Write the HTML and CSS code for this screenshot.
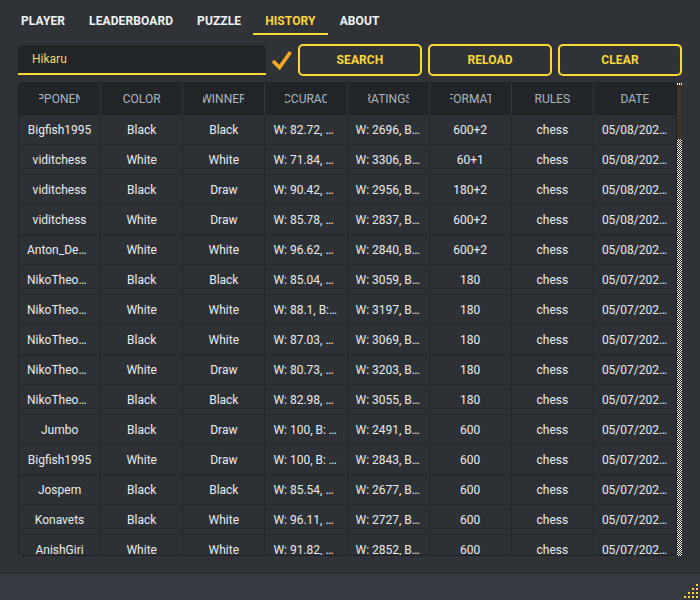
FILE: index.html
```html
<!DOCTYPE html>
<html>
<head>
<meta charset="utf-8">
<link rel="stylesheet" href="styles.css">
</head>
<body>
<div class="app">
  <nav class="tabs">
    <a class="tab">PLAYER</a>
    <a class="tab">LEADERBOARD</a>
    <a class="tab">PUZZLE</a>
    <a class="tab active">HISTORY</a>
    <a class="tab">ABOUT</a>
  </nav>
  <main class="content">
    <div class="toolbar">
      <div class="search-input">Hikaru</div>
      <div class="check">
        <svg width="22" height="20" viewBox="0 0 22 20"><polyline points="2,11 8.5,17.5 19.5,2" fill="none" stroke="#f7a823" stroke-width="3.6"/></svg>
      </div>
      <button class="btn">SEARCH</button>
      <button class="btn">RELOAD</button>
      <button class="btn">CLEAR</button>
    </div>
    <div class="table-wrap">
      <div class="table">
        <div class="row head">
          <div class="hcell"><div class="clip"><span>OPPONENT</span></div></div>
          <div class="hcell"><div class="clip"><span>COLOR</span></div></div>
          <div class="hcell"><div class="clip"><span>WINNER</span></div></div>
          <div class="hcell"><div class="clip"><span>ACCURACY</span></div></div>
          <div class="hcell"><div class="clip"><span>RATINGS</span></div></div>
          <div class="hcell"><div class="clip"><span>FORMAT</span></div></div>
          <div class="hcell"><div class="clip"><span>RULES</span></div></div>
          <div class="hcell"><div class="clip"><span>DATE</span></div></div>
        </div>
        <div class="row"><div class="cell">Bigfish1995</div><div class="cell">Black</div><div class="cell">Black</div><div class="cell">W: 82.72, B: 79.10</div><div class="cell">W: 2696, B: 3206</div><div class="cell">600+2</div><div class="cell">chess</div><div class="cell">05/08/2022, 21:14</div></div>
        <div class="row"><div class="cell">viditchess</div><div class="cell">White</div><div class="cell">White</div><div class="cell">W: 71.84, B: 65.20</div><div class="cell">W: 3306, B: 2710</div><div class="cell">60+1</div><div class="cell">chess</div><div class="cell">05/08/2022, 19:02</div></div>
        <div class="row"><div class="cell">viditchess</div><div class="cell">Black</div><div class="cell">Draw</div><div class="cell">W: 90.42, B: 91.05</div><div class="cell">W: 2956, B: 2960</div><div class="cell">180+2</div><div class="cell">chess</div><div class="cell">05/08/2022, 18:47</div></div>
        <div class="row"><div class="cell">viditchess</div><div class="cell">White</div><div class="cell">Draw</div><div class="cell">W: 85.78, B: 84.30</div><div class="cell">W: 2837, B: 2790</div><div class="cell">600+2</div><div class="cell">chess</div><div class="cell">05/08/2022, 18:20</div></div>
        <div class="row"><div class="cell">Anton_Demchenko</div><div class="cell">White</div><div class="cell">White</div><div class="cell">W: 96.62, B: 80.11</div><div class="cell">W: 2840, B: 2701</div><div class="cell">600+2</div><div class="cell">chess</div><div class="cell">05/08/2022, 17:55</div></div>
        <div class="row"><div class="cell">NikoTheodorou</div><div class="cell">Black</div><div class="cell">Black</div><div class="cell">W: 85.04, B: 92.40</div><div class="cell">W: 3059, B: 3227</div><div class="cell">180</div><div class="cell">chess</div><div class="cell">05/07/2022, 23:41</div></div>
        <div class="row"><div class="cell">NikoTheodorou</div><div class="cell">White</div><div class="cell">White</div><div class="cell">W: 88.1, B: 76.3</div><div class="cell">W: 3197, B: 3052</div><div class="cell">180</div><div class="cell">chess</div><div class="cell">05/07/2022, 23:33</div></div>
        <div class="row"><div class="cell">NikoTheodorou</div><div class="cell">Black</div><div class="cell">White</div><div class="cell">W: 87.03, B: 80.65</div><div class="cell">W: 3069, B: 3190</div><div class="cell">180</div><div class="cell">chess</div><div class="cell">05/07/2022, 23:25</div></div>
        <div class="row"><div class="cell">NikoTheodorou</div><div class="cell">White</div><div class="cell">Draw</div><div class="cell">W: 80.73, B: 82.21</div><div class="cell">W: 3203, B: 3061</div><div class="cell">180</div><div class="cell">chess</div><div class="cell">05/07/2022, 23:17</div></div>
        <div class="row"><div class="cell">NikoTheodorou</div><div class="cell">Black</div><div class="cell">Black</div><div class="cell">W: 82.98, B: 90.14</div><div class="cell">W: 3055, B: 3210</div><div class="cell">180</div><div class="cell">chess</div><div class="cell">05/07/2022, 23:09</div></div>
        <div class="row"><div class="cell">Jumbo</div><div class="cell">Black</div><div class="cell">Draw</div><div class="cell">W: 100, B: 100</div><div class="cell">W: 2491, B: 2843</div><div class="cell">600</div><div class="cell">chess</div><div class="cell">05/07/2022, 20:30</div></div>
        <div class="row"><div class="cell">Bigfish1995</div><div class="cell">White</div><div class="cell">Draw</div><div class="cell">W: 100, B: 100</div><div class="cell">W: 2843, B: 2696</div><div class="cell">600</div><div class="cell">chess</div><div class="cell">05/07/2022, 20:05</div></div>
        <div class="row"><div class="cell">Jospem</div><div class="cell">Black</div><div class="cell">Black</div><div class="cell">W: 85.54, B: 89.02</div><div class="cell">W: 2677, B: 2843</div><div class="cell">600</div><div class="cell">chess</div><div class="cell">05/07/2022, 19:40</div></div>
        <div class="row"><div class="cell">Konavets</div><div class="cell">Black</div><div class="cell">White</div><div class="cell">W: 96.11, B: 78.40</div><div class="cell">W: 2727, B: 2843</div><div class="cell">600</div><div class="cell">chess</div><div class="cell">05/07/2022, 19:12</div></div>
        <div class="row"><div class="cell">AnishGiri</div><div class="cell">White</div><div class="cell">White</div><div class="cell">W: 91.82, B: 80.77</div><div class="cell">W: 2852, B: 2843</div><div class="cell">600</div><div class="cell">chess</div><div class="cell">05/07/2022, 18:50</div></div>
      </div>
      <div class="scrollbar"><div class="dots"></div><div class="thumb"></div></div>
    </div>
  </main>
  <footer class="status">
    <svg class="grip" width="14" height="14" viewBox="0 0 14 14" fill="#fdd835">
      <rect x="12" y="0" width="2" height="2"/>
      <rect x="8" y="4" width="2" height="2"/><rect x="12" y="4" width="2" height="2"/>
      <rect x="4" y="8" width="2" height="2"/><rect x="8" y="8" width="2" height="2"/><rect x="12" y="8" width="2" height="2"/>
      <rect x="0" y="12" width="2" height="2"/><rect x="4" y="12" width="2" height="2"/><rect x="8" y="12" width="2" height="2"/><rect x="12" y="12" width="2" height="2"/>
    </svg>
  </footer>
</div>
</body>
</html>
```
FILE: styles.css
```css
html, body {
  margin: 0;
  padding: 0;
  background: #2f3337;
  font-family: Roboto, "Liberation Sans", sans-serif;
  overflow: hidden;
}

.app {
  width: 700px;
  height: 600px;
  display: flex;
  flex-direction: column;
}

.tabs {
  display: flex;
  height: 35px;
  padding-left: 9px;
}

.tab {
  box-sizing: border-box;
  height: 35px;
  padding: 8px 12px 0;
  display: flex;
  align-items: center;
  font-size: 12px;
  font-weight: 700;
  letter-spacing: 0.1px;
  color: #f1f3f5;
  border-bottom: 2px solid transparent;
}

.tab.active {
  color: #fdd835;
  border-bottom-color: #fdd835;
}

.content {
  flex: 1;
  padding: 9px 18px 0;
}

.toolbar {
  display: flex;
  align-items: center;
  height: 32px;
}

.search-input {
  box-sizing: border-box;
  width: 248px;
  height: 30px;
  background: #222528;
  border-bottom: 2px solid #fdd835;
  border-radius: 4px 4px 0 0;
  padding-left: 14px;
  display: flex;
  align-items: center;
  color: #f2d56c;
  font-size: 12px;
}

.check {
  width: 32px;
  display: flex;
  justify-content: center;
  align-items: center;
  height: 32px;
}

.btn {
  box-sizing: border-box;
  width: 124px;
  height: 32px;
  margin-left: 6px;
  background: transparent;
  border: 2px solid #fdd835;
  border-radius: 5px;
  color: #fdd835;
  font-family: Roboto, "Liberation Sans", sans-serif;
  font-size: 12px;
  font-weight: 700;
  letter-spacing: 0.1px;
  padding: 0;
}

.check + .btn {
  margin-left: 0;
}

.table-wrap {
  margin-top: 6px;
  height: 474px;
  display: flex;
}

.table {
  flex: 1;
  border: 1px solid #1f2225;
  border-radius: 4px;
  overflow: hidden;
  background: #2d3135;
}

.row {
  display: grid;
  grid-template-columns: repeat(8, 1fr);
  height: 30px;
  box-sizing: border-box;
  border-bottom: 1px solid #25292c;
}

.row.head {
  height: 32px;
  background: #222528;
  border-bottom: none;
}

.hcell {
  padding: 0 20px;
  display: flex;
  align-items: center;
  border-right: 1px solid #34383c;
  min-width: 0;
}

.hcell:last-child,
.cell:last-child {
  border-right: none;
}

.clip {
  flex: 1;
  overflow: hidden;
  display: flex;
  justify-content: center;
  min-width: 0;
}

.clip span {
  flex-shrink: 0;
  white-space: nowrap;
  font-size: 12px;
  color: #aab6c3;
}

.cell {
  min-width: 0;
  padding: 1px 8px 0;
  line-height: 29px;
  text-align: center;
  font-size: 12px;
  color: #e9ecef;
  white-space: nowrap;
  overflow: hidden;
  text-overflow: ellipsis;
  border-right: 1px solid #25292c;
}

.scrollbar {
  width: 5px;
  background: #3a3529;
  display: flex;
  flex-direction: column;
}

.dots {
  height: 2px;
  margin-top: 1px;
  background: repeating-linear-gradient(90deg, #ffffff 0 1px, transparent 1px 2px);
}

.thumb {
  margin-top: auto;
  height: 417px;
  background: repeating-conic-gradient(#ffffff 0 25%, #1e1e1e 0 50%) 0 0 / 2px 2px;
}

.status {
  height: 26px;
  background: #363a40;
  position: relative;
}

.grip {
  position: absolute;
  right: 2px;
  bottom: 2px;
}
```
